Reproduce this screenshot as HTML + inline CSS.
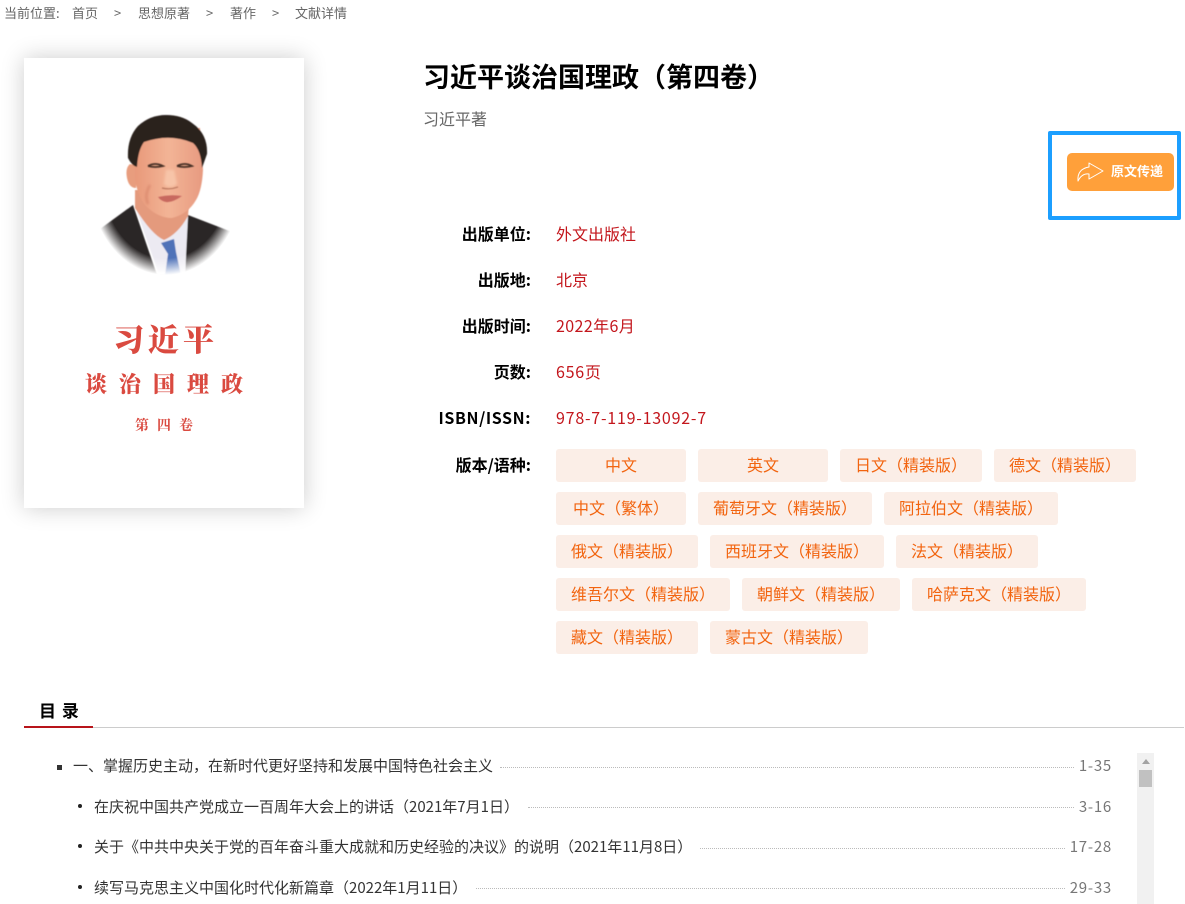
<!DOCTYPE html>
<html lang="zh-CN"><head><meta charset="utf-8"><title>文献详情</title>
<style>
html,body{margin:0;padding:0;background:#fff;}
body{width:1185px;height:904px;overflow:hidden;position:relative;font-family:"Noto Sans CJK SC","Liberation Sans",sans-serif;}
.a{position:absolute;white-space:nowrap;}
.bc{top:4px;font-size:13px;line-height:18px;color:#666;}
.lb{left:400px;width:131px;text-align:right;font-size:16px;font-weight:bold;color:#000;line-height:24px;}
.v{left:556px;font-size:16px;color:#c3161c;line-height:24px;}
.t{height:33px;line-height:31px;background:#fbeee7;border-radius:3px;color:#f2640f;font-size:16px;text-align:center;}
.cv{font-family:"Noto Serif CJK SC",serif;font-weight:900;color:#da4a40;line-height:1;}
.r{font-size:15px;color:#333;line-height:20px;}
.p{font-size:15px;color:#777;line-height:20px;text-align:right;right:73px;letter-spacing:.75px;}
.d{height:0;border-top:1px dotted #bbb;}
.b1{left:57px;top:765px;width:5px;height:5px;background:#333;}
.b2{left:78px;width:4px;height:4px;border-radius:50%;background:#222;}
</style></head><body>
<div class="a bc" style="left:4px">当前位置:</div>
<div class="a bc" style="left:72px">首页</div><div class="a bc" style="left:114px">&gt;</div>
<div class="a bc" style="left:138px">思想原著</div><div class="a bc" style="left:206px">&gt;</div>
<div class="a bc" style="left:230px">著作</div><div class="a bc" style="left:272px">&gt;</div>
<div class="a bc" style="left:295px">文献详情</div>

<div class="a" style="left:24px;top:58px;width:280px;height:450px;background:#fff;box-shadow:0 0 22px rgba(0,0,0,.2);"></div>
<svg class="a" style="left:80px;top:100px" width="170" height="185" viewBox="0 0 170 185">
<defs>
<radialGradient id="fade" cx=".5" cy=".5" r=".5"><stop offset=".82" stop-color="#fff"/><stop offset="1" stop-color="#000"/></radialGradient>
<linearGradient id="sk" x1="0" y1="0" x2="1" y2="0"><stop offset="0" stop-color="#e8997a"/><stop offset=".5" stop-color="#f3b496"/><stop offset="1" stop-color="#e79a80"/></linearGradient>
<mask id="m" maskUnits="userSpaceOnUse" x="0" y="0" width="170" height="185"><ellipse cx="86" cy="82" rx="76" ry="93" fill="url(#fade)"/></mask>
<filter id="s"><feGaussianBlur stdDeviation=".6"/></filter>
<filter id="s2"><feGaussianBlur stdDeviation="1.4"/></filter>
</defs>
<g filter="url(#s)" mask="url(#m)">
<path d="M20 129 L53 105 L77 175 L105 175 L108 115 L152 132 L160 185 L10 185Z" fill="#2c2628"/>
<path d="M55 106 L78 172 H105 L108 114 L85 128Z" fill="#eceaf2"/>
<path d="M55 90 L55 108 Q72 135 84 140 Q98 134 108 116 L110 90Z" fill="#e49a7d"/>
<path d="M81 143 L94 139 L96 152 L101 175 H85 L88 154Z" fill="#4f72b8"/>
</g>
<g filter="url(#s)">
<path d="M50 64 Q45 68 47 78 Q49 88 56 88 L58 66Z" fill="#e89d7e"/>
<path d="M120 62 L122 78 Q120 88 115 88 L112 62Z" fill="#e49679"/>
<path d="M56 28 H120 L123 70 Q122 90 116 100 Q108 114 92 118 Q78 118 66 106 Q56 94 55 76Z" fill="url(#sk)"/>
<path d="M48 58 Q47 38 58 26 Q70 15 86 15 Q102 15 112 23 Q128 34 127 54 L122 68 Q121 50 113 43 Q90 33 64 42 Q58 50 57 67 Q52 66 48 58Z" fill="#2b211f"/>
</g>
<g filter="url(#s2)"><path d="M86 70 L84 84 Q90 90 97 84 L94 70Z" fill="#f7c4a8"/><path d="M70 85 Q64 95 68 104" stroke="#d9876c" stroke-width="2" fill="none"/></g>
<g filter="url(#s)">
<path d="M68 66 Q75 62 83 66 Q75 68 68 66M97 66 Q105 62 112 66 Q104 68 97 66" stroke="#4a3028" stroke-width="1.8" fill="none"/>
<path d="M82 88 Q90 90 98 87" stroke="#b9765d" stroke-width="1.2" fill="none"/>
<path d="M78 97 Q90 94 102 96 Q92 103 86 102Q81 101 78 97Z" fill="#c8695f"/>
</g>
</svg>
<div class="a cv" style="left:113px;top:322px;font-size:31px;letter-spacing:4px;">习近平</div>
<div class="a cv" style="left:85px;top:373px;font-size:22px;letter-spacing:12px;">谈治国理政</div>
<div class="a cv" style="left:135px;top:418px;font-size:14px;letter-spacing:8px;font-weight:700;">第四卷</div>

<div class="a" style="left:423px;top:57px;font-size:27px;line-height:38px;font-weight:bold;color:#000;">习近平谈治国理政（第四卷）</div>
<div class="a" style="left:423px;top:106px;font-size:16px;line-height:24px;color:#666;">习近平著</div>

<div class="a" style="left:1048px;top:131px;width:125px;height:81px;border:4px solid #1c9fff;border-radius:2px;"></div>
<div class="a" style="left:1067px;top:153px;width:107px;height:38px;background:#ffa03a;border-radius:5px;"></div>
<svg class="a" style="left:1076px;top:160px" width="28" height="24" viewBox="0 0 28 24" fill="none" stroke="#fff" stroke-width="1" stroke-linejoin="round"><path d="M2 21 Q1 9 13 7 L13 3 L27 11 L13 19 L13 14 Q6 13 2 21Z"/></svg>
<div class="a" style="left:1111px;top:161px;font-size:13px;line-height:20px;font-weight:bold;color:#fff;">原文传递</div>

<div class="a lb" style="top:221px">出版单位:</div><div class="a v" style="top:221px">外文出版社</div>
<div class="a lb" style="top:267px">出版地:</div><div class="a v" style="top:267px">北京</div>
<div class="a lb" style="top:313px">出版时间:</div><div class="a v" style="top:313px;letter-spacing:.4px">2022年6月</div>
<div class="a lb" style="top:359px">页数:</div><div class="a v" style="top:359px;letter-spacing:.75px">656页</div>
<div class="a lb" style="top:405px;letter-spacing:.6px">ISBN/ISSN:</div><div class="a v" style="top:405px;letter-spacing:.78px">978-7-119-13092-7</div>
<div class="a lb" style="top:452px">版本/语种:</div>

<div class="a t" style="left:556px;top:449px;width:130px">中文</div>
<div class="a t" style="left:698px;top:449px;width:130px">英文</div>
<div class="a t" style="left:840px;top:449px;width:142px">日文（精装版）</div>
<div class="a t" style="left:994px;top:449px;width:142px">德文（精装版）</div>
<div class="a t" style="left:556px;top:492px;width:130px">中文（繁体）</div>
<div class="a t" style="left:698px;top:492px;width:174px">葡萄牙文（精装版）</div>
<div class="a t" style="left:884px;top:492px;width:174px">阿拉伯文（精装版）</div>
<div class="a t" style="left:556px;top:535px;width:142px">俄文（精装版）</div>
<div class="a t" style="left:710px;top:535px;width:174px">西班牙文（精装版）</div>
<div class="a t" style="left:896px;top:535px;width:142px">法文（精装版）</div>
<div class="a t" style="left:556px;top:578px;width:174px">维吾尔文（精装版）</div>
<div class="a t" style="left:742px;top:578px;width:158px">朝鲜文（精装版）</div>
<div class="a t" style="left:912px;top:578px;width:174px">哈萨克文（精装版）</div>
<div class="a t" style="left:556px;top:621px;width:142px">藏文（精装版）</div>
<div class="a t" style="left:710px;top:621px;width:158px">蒙古文（精装版）</div>

<div class="a" style="left:39px;top:698px;font-size:17px;line-height:24px;font-weight:bold;color:#000;letter-spacing:1px;">目 录</div>
<div class="a" style="left:24px;top:727px;width:1160px;height:1px;background:#ccc;"></div>
<div class="a" style="left:24px;top:726px;width:69px;height:2px;background:#b8141a;"></div>

<div class="a b1"></div>
<div class="a r" style="left:73px;top:756px">一、掌握历史主动，在新时代更好坚持和发展中国特色社会主义</div>
<div class="a d" style="left:500px;top:767px;width:574px"></div><div class="a p" style="top:756px">1-35</div>

<div class="a b2" style="top:804px"></div>
<div class="a r" style="left:94px;top:797px">在庆祝中国共产党成立一百周年大会上的讲话（2021年7月1日）</div>
<div class="a d" style="left:528px;top:807px;width:546px"></div><div class="a p" style="top:797px">3-16</div>

<div class="a b2" style="top:844px"></div>
<div class="a r" style="left:94px;top:837px">关于《中共中央关于党的百年奋斗重大成就和历史经验的决议》的说明（2021年11月8日）</div>
<div class="a d" style="left:700px;top:848px;width:365px"></div><div class="a p" style="top:837px">17-28</div>

<div class="a b2" style="top:885px"></div>
<div class="a r" style="left:94px;top:878px">续写马克思主义中国化时代化新篇章（2022年1月11日）</div>
<div class="a d" style="left:476px;top:888px;width:589px"></div><div class="a p" style="top:878px">29-33</div>

<div class="a" style="left:1137px;top:753px;width:17px;height:151px;background:#f1f1f1;"></div>
<div class="a" style="left:1142px;top:759px;width:0;height:0;border-left:4px solid transparent;border-right:4px solid transparent;border-bottom:5px solid #a3a3a3;"></div>
<div class="a" style="left:1139px;top:770px;width:13px;height:17px;background:#c1c1c1;"></div>
</body></html>
